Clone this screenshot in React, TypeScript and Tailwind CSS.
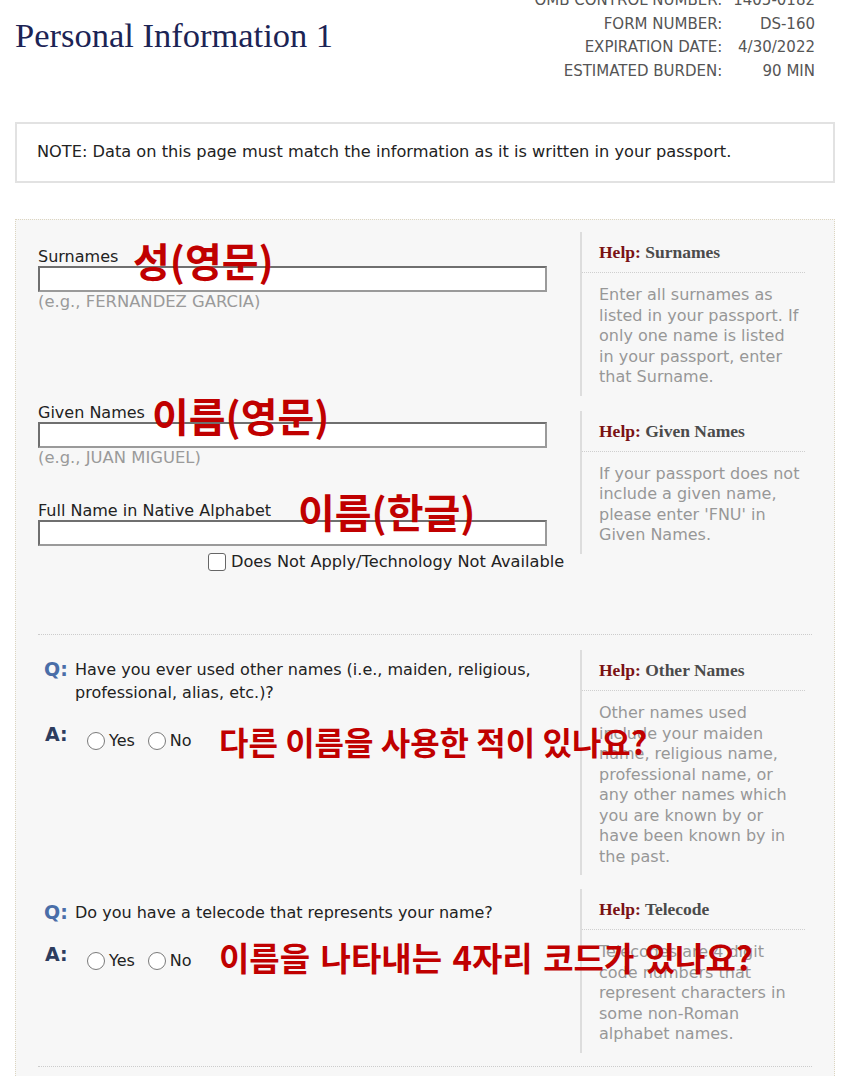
import React from "react";

function HelpBox({ title, children, className = "" }: { title: string; children: React.ReactNode; className?: string }) {
  return (
    <div className={"w-[225px] border-l-2 border-[#dddddd] " + className}>
      <div className="pl-[17px] pt-[10px] pb-[10px] border-b border-dotted border-[#cfcfcf] font-['Liberation_Serif',serif] font-bold text-[17.5px] leading-[20px]">
        <span className="text-[#7a1214]">Help:</span> <span className="text-[#4b4b4b]">{title}</span>
      </div>
      <div className="pl-[17px] pr-[4px] pt-[12px] pb-[8px] text-[16px] leading-[20.5px] text-[#979797]">{children}</div>
    </div>
  );
}

function Radio({ label }: { label: string }) {
  return (
    <span className="flex items-center gap-[4px]">
      <span className="w-[18px] h-[18px] rounded-full border-[1.5px] border-[#7a7a7a] bg-white" />
      <span className="text-[16px] leading-[18px] text-[#222]">{label}</span>
    </span>
  );
}

function TextInput() {
  return <div className="w-[509px] h-[26px] bg-white border-2 border-[#9a9a9a] border-t-[#6f6f6f] border-l-[#6f6f6f]" />;
}

function QA({ q, pt }: { q: React.ReactNode; pt: string }) {
  return (
    <div className={"w-[564px] pl-[22px] " + pt}>
      <div className="flex items-start">
        <span className="w-[37px] pl-[6px] font-bold text-[19px] leading-[23px] text-[#4a6ea8]">Q:</span>
        <span className="w-[470px] text-[16px] leading-[23px] text-[#222]">{q}</span>
      </div>
      <div className="flex items-start mt-[19px]">
        <span className="w-[37px] pl-[7px] font-bold text-[19px] leading-[23px] text-[#2d3c5e]">A:</span>
        <div className="flex items-center gap-[13px] ml-[12px] mt-[9px]">
          <Radio label="Yes" />
          <Radio label="No" />
        </div>
      </div>
    </div>
  );
}

export default function App() {
  return (
    <div className="relative min-h-[1076px] bg-white overflow-hidden font-['DejaVu_Sans','Noto_Sans_CJK_KR',sans-serif] text-[#222]">
      {/* header */}
      <div className="flex items-start justify-between pl-[15px] pr-[32px]">
        <h1 className="mt-[18px] font-['Liberation_Serif',serif] text-[34.5px] leading-none text-[#1c2455]">Personal Information 1</h1>
        <div className="-mt-[11px] grid grid-cols-[auto_auto] gap-x-[11px] text-right text-[15px] leading-[23.5px] text-[#555]">
          <span>OMB CONTROL NUMBER:</span>
          <span>1405-0182</span>
          <span>FORM NUMBER:</span>
          <span>DS-160</span>
          <span>EXPIRATION DATE:</span>
          <span>4/30/2022</span>
          <span>ESTIMATED BURDEN:</span>
          <span>90 MIN</span>
        </div>
      </div>

      {/* note */}
      <div className="ml-[15px] mr-[12px] mt-[39px] h-[61px] border-2 border-[#e2e2e2] flex items-center pl-[20px] text-[16.2px] text-[#222]">
        NOTE: Data on this page must match the information as it is written in your passport.
      </div>

      {/* main panel */}
      <div className="ml-[15px] mr-[12px] mt-[36px] border border-dotted border-[#dcd5c0] bg-[#f7f7f7] pb-[40px]">
        <div className="flex">
          <div className="w-[564px] pl-[22px] pt-[28px]">
            <div className="text-[16px] leading-[18px]">Surnames</div>
            <TextInput />
            <div className="mt-[1px] text-[16.4px] leading-[18px] text-[#9a9a9a]">(e.g., FERNANDEZ GARCIA)</div>
            <div className="mt-[93px] text-[16px] leading-[18px]">Given Names</div>
            <TextInput />
            <div className="mt-[1px] text-[16.4px] leading-[18px] text-[#9a9a9a]">(e.g., JUAN MIGUEL)</div>
            <div className="mt-[35px] text-[16px] leading-[18px]">Full Name in Native Alphabet</div>
            <TextInput />
            <div className="mt-[7px] pl-[170px] flex items-center gap-[5px]">
              <span className="w-[18px] h-[18px] rounded-[3px] border-[1.5px] border-[#666] bg-white" />
              <span className="text-[16.2px] leading-[18px] whitespace-nowrap">Does Not Apply/Technology Not Available</span>
            </div>
          </div>
          <div className="pt-[12px]">
            <HelpBox title="Surnames">
              Enter all surnames as listed in your passport. If only one name is listed in your passport, enter that Surname.
            </HelpBox>
            <HelpBox title="Given Names" className="mt-[15px]">
              If your passport does not include a given name, please enter 'FNU' in Given Names.
            </HelpBox>
          </div>
        </div>

        <div className="mx-[22px] mt-[63px] border-t border-dotted border-[#cccccc]" />

        <div className="flex">
          <QA pt="pt-[23px]" q="Have you ever used other names (i.e., maiden, religious, professional, alias, etc.)?" />
          <div className="pt-[15px]">
            <HelpBox title="Other Names">
              Other names used include your maiden name, religious name, professional name, or any other names which you are known by or have been known by in the past.
            </HelpBox>
          </div>
        </div>

        <div className="flex">
          <QA pt="pt-[26px]" q="Do you have a telecode that represents your name?" />
          <div className="pt-[14px]">
            <HelpBox title="Telecode">
              Telecodes are 4 digit code numbers that represent characters in some non-Roman alphabet names.
            </HelpBox>
          </div>
        </div>

        <div className="mx-[22px] mt-[13px] border-t border-dotted border-[#cccccc]" />
      </div>

      {/* red annotations */}
      <div className="absolute left-[133px] top-[240px] font-['Noto_Sans_CJK_KR',sans-serif] font-bold text-[40px] leading-none text-[#c00000]">성(영문)</div>
      <div className="absolute left-[152px] top-[395px] font-['Noto_Sans_CJK_KR',sans-serif] font-bold text-[40px] leading-none text-[#c00000]">이름(영문)</div>
      <div className="absolute left-[298px] top-[491px] font-['Noto_Sans_CJK_KR',sans-serif] font-bold text-[40px] leading-none text-[#c00000]">이름(한글)</div>
      <div className="absolute left-[219px] top-[725px] font-['Noto_Sans_CJK_KR',sans-serif] font-bold text-[32px] leading-none text-[#c00000] whitespace-nowrap">다른 이름을 사용한 적이 있나요?</div>
      <div className="absolute left-[219px] top-[941px] font-['Noto_Sans_CJK_KR',sans-serif] font-bold text-[33px] leading-none text-[#c00000] whitespace-nowrap [word-spacing:3px]">이름을 나타내는 4자리 코드가 있나요?</div>
    </div>
  );
}
